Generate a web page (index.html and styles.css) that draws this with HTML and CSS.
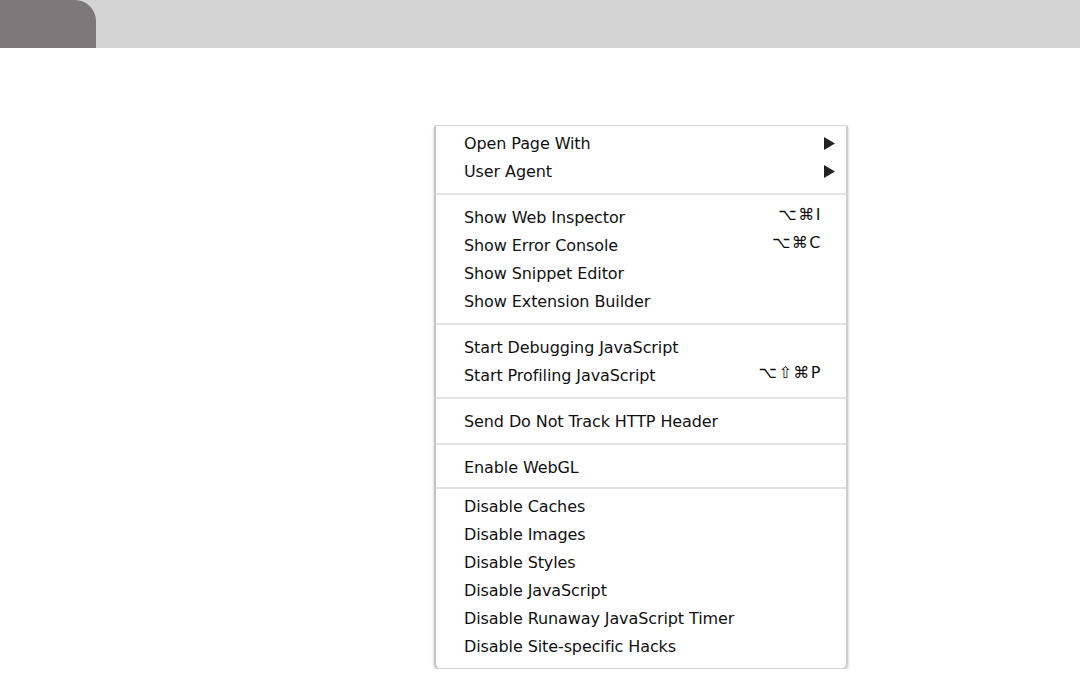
FILE: index.html
```html
<!DOCTYPE html>
<html>
<head>
<meta charset="utf-8">
<link rel="stylesheet" href="styles.css">
</head>
<body>
<div class="topbar"><div class="tab"></div></div>
<div class="stage">
  <div class="menu">
    <div class="item"><span class="label">Open Page With</span><svg class="arrow" width="11" height="13" viewBox="0 0 11 13"><path d="M0 0 L11 6.5 L0 13 Z" fill="#222"/></svg></div>
    <div class="item"><span class="label">User Agent</span><svg class="arrow" width="11" height="13" viewBox="0 0 11 13"><path d="M0 0 L11 6.5 L0 13 Z" fill="#222"/></svg></div>
    <div class="sep"></div>
    <div class="item"><span class="label">Show Web Inspector</span><span class="key">⌥⌘I</span></div>
    <div class="item"><span class="label">Show Error Console</span><span class="key">⌥⌘C</span></div>
    <div class="item"><span class="label">Show Snippet Editor</span></div>
    <div class="item"><span class="label">Show Extension Builder</span></div>
    <div class="sep"></div>
    <div class="item"><span class="label">Start Debugging JavaScript</span></div>
    <div class="item"><span class="label">Start Profiling JavaScript</span><span class="key">⌥⇧⌘P</span></div>
    <div class="sep"></div>
    <div class="item"><span class="label">Send Do Not Track HTTP Header</span></div>
    <div class="sep"></div>
    <div class="item"><span class="label">Enable WebGL</span></div>
    <div class="sep sep-tight"></div>
    <div class="item"><span class="label">Disable Caches</span></div>
    <div class="item"><span class="label">Disable Images</span></div>
    <div class="item"><span class="label">Disable Styles</span></div>
    <div class="item"><span class="label">Disable JavaScript</span></div>
    <div class="item"><span class="label">Disable Runaway JavaScript Timer</span></div>
    <div class="item"><span class="label">Disable Site-specific Hacks</span></div>
  </div>
</div>
</body>
</html>
```

FILE: styles.css
```css
html, body {
  margin: 0;
  padding: 0;
  background: #ffffff;
}
body {
  font-family: "DejaVu Sans", "Liberation Sans", sans-serif;
  color: #111111;
}
.topbar {
  height: 48px;
  background: #d4d4d4;
  display: flex;
}
.tab {
  width: 96px;
  height: 48px;
  background: #7b7979;
  border-top-right-radius: 21px;
}
.stage {
  padding-top: 77px;
  padding-left: 434px;
}
.menu {
  width: 414px;
  background: #ffffff;
  border: 1px solid #d6d6d6;
  border-left: 2px solid #c4c4c4;
  border-right: 2px solid #cfcfcf;
  border-radius: 2px 2px 6px 6px;
  box-shadow: 0 2px 3px rgba(0,0,0,0.25);
  padding: 3px 0 8px 0;
  box-sizing: border-box;
}
.item {
  height: 28px;
  display: flex;
  align-items: center;
  padding-left: 28px;
  padding-right: 11px;
  font-size: 16px;
  letter-spacing: -0.1px;
}
.label {
  flex: 1;
  white-space: nowrap;
}
.key {
  font-size: 16px;
  margin-right: 13px;
  margin-top: -6px;
  letter-spacing: 1.5px;
}
.arrow {
  display: block;
}
.sep {
  height: 2px;
  background: #e2e2e2;
  margin: 8px 0 8px 0;
}
.sep-tight {
  margin: 6px 0 3px 0;
}
```
